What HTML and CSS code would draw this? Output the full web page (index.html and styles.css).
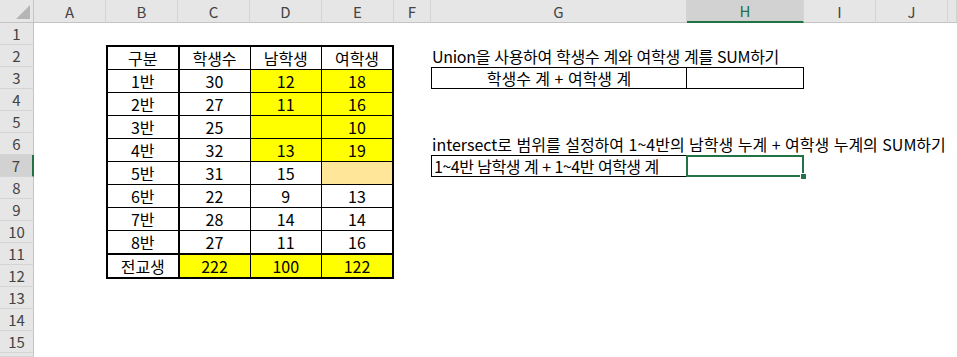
FILE: index.html
```html
<!DOCTYPE html>
<html lang="ko">
<head>
    <meta charset="UTF-8">
    <meta name="viewport" content="width=device-width, initial-scale=1.0">
    <title>Union / Intersect</title>
    <link rel="stylesheet" href="styles.css">
</head>
<body>
    <div class="sheet">
        <!-- column headers -->
        <div class="corner"><span class="corner-tri"></span></div>
        <div class="col-head" style="grid-column: 2">A</div>
        <div class="col-head" style="grid-column: 3">B</div>
        <div class="col-head" style="grid-column: 4">C</div>
        <div class="col-head" style="grid-column: 5">D</div>
        <div class="col-head" style="grid-column: 6">E</div>
        <div class="col-head" style="grid-column: 7">F</div>
        <div class="col-head" style="grid-column: 8">G</div>
        <div class="col-head active" style="grid-column: 9">H</div>
        <div class="col-head" style="grid-column: 10">I</div>
        <div class="col-head" style="grid-column: 11">J</div>
        <div class="col-head" style="grid-column: 12"></div>

        <!-- row headers -->
        <div class="row-head" style="grid-row: 2">1</div>
        <div class="row-head" style="grid-row: 3">2</div>
        <div class="row-head" style="grid-row: 4">3</div>
        <div class="row-head" style="grid-row: 5">4</div>
        <div class="row-head" style="grid-row: 6">5</div>
        <div class="row-head" style="grid-row: 7">6</div>
        <div class="row-head active" style="grid-row: 8">7</div>
        <div class="row-head" style="grid-row: 9">8</div>
        <div class="row-head" style="grid-row: 10">9</div>
        <div class="row-head" style="grid-row: 11">10</div>
        <div class="row-head" style="grid-row: 12">11</div>
        <div class="row-head" style="grid-row: 13">12</div>
        <div class="row-head" style="grid-row: 14">13</div>
        <div class="row-head" style="grid-row: 15">14</div>
        <div class="row-head" style="grid-row: 16">15</div>
        <div class="row-head" style="grid-row: 17"></div>

        <!-- B2:E11 -->
        <table class="scores">
            <tr><td class="first">구분</td><td>학생수</td><td>남학생</td><td>여학생</td></tr>
            <tr><td class="first">1반</td><td>30</td><td class="hl">12</td><td class="hl">18</td></tr>
            <tr><td class="first">2반</td><td>27</td><td class="hl">11</td><td class="hl">16</td></tr>
            <tr><td class="first">3반</td><td>25</td><td class="hl"></td><td class="hl">10</td></tr>
            <tr><td class="first">4반</td><td>32</td><td class="hl">13</td><td class="hl">19</td></tr>
            <tr><td class="first">5반</td><td>31</td><td>15</td><td class="soft"></td></tr>
            <tr><td class="first">6반</td><td>22</td><td>9</td><td>13</td></tr>
            <tr><td class="first">7반</td><td>28</td><td>14</td><td>14</td></tr>
            <tr><td class="first">8반</td><td>27</td><td>11</td><td>16</td></tr>
            <tr class="total"><td class="first">전교생</td><td class="hl">222</td><td class="hl">100</td><td class="hl">122</td></tr>
        </table>

        <!-- G2:H3 -->
        <div class="note tight" style="grid-row: 3">Union을 사용하여 학생수 계와 여학생 계를 SUM하기</div>
        <div class="box box-g center" style="grid-row: 4">학생수 계 + 여학생 계</div>
        <div class="box box-h" style="grid-row: 4"></div>

        <!-- G6:H7 -->
        <div class="note" style="grid-row: 7">intersect로 범위를 설정하여 1~4반의 남학생 누계 + 여학생 누계의 SUM하기</div>
        <div class="box box-g tighter" style="grid-row: 8">1~4반 남학생 계 + 1~4반 여학생 계</div>
        <div class="box box-h selected" style="grid-row: 8"></div>
    </div>
</body>
</html>
```

FILE: styles.css
```css
html, body {
    margin: 0;
    height: 100%;
    background: #fff;
    overflow: hidden;
}

.sheet {
    display: grid;
    grid-template-columns: 34px 72px 72px 72px 72px 72px 37px 256px 117px 72px 72px 1fr;
    grid-template-rows: 23px repeat(15, 22px) 1fr;
    height: 100vh;
    font-family: "Noto Sans CJK KR", "Noto Sans", sans-serif;
    font-size: 16px;
    color: #000;
}

/* headers */
.corner {
    grid-column: 1;
    grid-row: 1;
    background: #e6e6e6;
    border-right: 1px solid #c4c4c4;
    border-bottom: 1px solid #c4c4c4;
    position: relative;
}

.corner-tri {
    position: absolute;
    right: 3px;
    bottom: 3px;
    width: 0;
    height: 0;
    border-left: 14px solid transparent;
    border-bottom: 14px solid #b5b5b5;
}

.col-head {
    grid-row: 1;
    background: #e6e6e6;
    border-bottom: 1px solid #c4c4c4;
    border-right: 1px solid #d4d4d4;
    color: #444;
    font-size: 15px;
    display: flex;
    align-items: center;
    justify-content: center;
}

.col-head.active {
    background: #d2d2d2;
    border-bottom: 2px solid #217346;
    color: #217346;
}

.row-head {
    grid-column: 1;
    background: #e6e6e6;
    border-right: 1px solid #c4c4c4;
    border-bottom: 1px solid #d4d4d4;
    color: #444;
    font-size: 15px;
    display: flex;
    align-items: center;
    justify-content: center;
}

.row-head.active {
    background: #d2d2d2;
    border-right: 2px solid #217346;
}

/* data table */
.scores {
    grid-column: 3 / 7;
    grid-row: 3 / 13;
    border-collapse: collapse;
    table-layout: fixed;
    width: 100%;
    height: 100%;
    border: 2px solid #000;
}

.scores td {
    border: 1px solid #000;
    text-align: center;
    padding: 0;
    height: 22px;
    line-height: 20px;
}

.scores td.first {
    border-right: 2px solid #000;
}

.scores tr.total td {
    border-top: 2px solid #000;
}

.scores td.hl {
    background: #ffff00;
}

.scores td.soft {
    background: #ffe699;
}

/* notes on the right */
.note {
    grid-column: 8 / 13;
    padding-left: 1px;
    white-space: nowrap;
    line-height: 22px;
}

.tight {
    letter-spacing: -0.3px;
}

.tighter {
    letter-spacing: -0.5px;
}

.box {
    border: 1px solid #000;
    line-height: 20px;
    white-space: nowrap;
    padding-left: 2px;
}

.box-g {
    grid-column: 8;
}

.box-g.center {
    text-align: center;
    padding-left: 0;
}

.box-h {
    grid-column: 9;
    border-left: none;
}

.selected {
    position: relative;
}

.selected::after {
    content: "";
    position: absolute;
    left: -1px;
    top: -1px;
    right: -1px;
    bottom: -1px;
    border: 2px solid #217346;
}

.selected::before {
    content: "";
    position: absolute;
    right: -4px;
    bottom: -4px;
    width: 5px;
    height: 5px;
    background: #217346;
    border: 1px solid #fff;
    z-index: 1;
}
```
